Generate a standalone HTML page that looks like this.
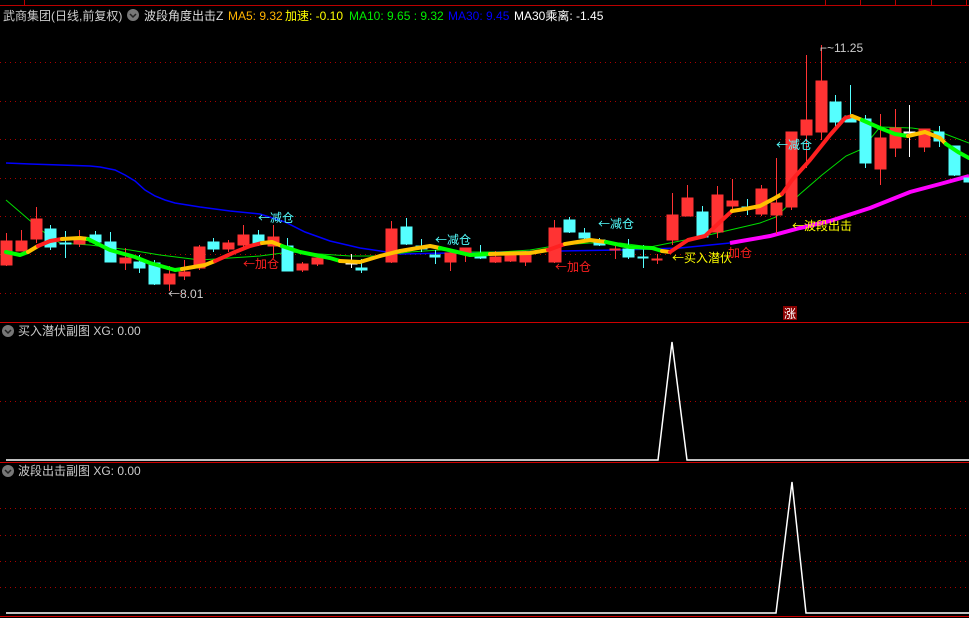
<!DOCTYPE html>
<html><head><meta charset="utf-8"><style>
html,body{margin:0;padding:0;background:#000;width:969px;height:618px;overflow:hidden}
svg{display:block}
text{font-family:"Liberation Sans","Noto Sans CJK SC",sans-serif;font-size:12px}
.ar{font-family:"Noto Sans CJK SC",sans-serif}
</style></head><body>
<svg width="969" height="618" viewBox="0 0 969 618" xmlns="http://www.w3.org/2000/svg">
<rect width="969" height="618" fill="#000"/>
<line x1="0" y1="5.5" x2="969" y2="5.5" stroke="#b00" stroke-width="1"/>
<g stroke="#b00"><line x1="24.5" y1="0" x2="24.5" y2="5"/><line x1="825.5" y1="0" x2="825.5" y2="5"/><line x1="860.5" y1="0" x2="860.5" y2="5"/><line x1="895.5" y1="0" x2="895.5" y2="5"/><line x1="931.5" y1="0" x2="931.5" y2="5"/><line x1="966.5" y1="0" x2="966.5" y2="5"/></g>
<text x="3" y="20" fill="#ccc">武商集团(日线,前复权)</text>
<circle cx="133" cy="15" r="6" fill="#777"/><path d="M130 14l3 3 3-3" stroke="#222" stroke-width="1.5" fill="none"/>
<text x="144" y="20" fill="#ddd">波段角度出击Z</text>
<text x="228" y="20" fill="#ffb400">MA5: 9.32</text>
<text x="285" y="20" fill="#ffff00">加速: -0.10</text>
<text x="349" y="20" fill="#00ee00">MA10: 9.65 : 9.32</text>
<text x="448" y="20" fill="#0000ff">MA30: 9.45</text>
<text x="514" y="20" fill="#fff">MA30乘离: -1.45</text>
<g stroke="#a00" stroke-width="1" stroke-dasharray="1 4">
<line x1="0" y1="62.5" x2="969" y2="62.5"/><line x1="0" y1="101.5" x2="969" y2="101.5"/><line x1="0" y1="139.5" x2="969" y2="139.5"/><line x1="0" y1="178.5" x2="969" y2="178.5"/><line x1="0" y1="216.5" x2="969" y2="216.5"/><line x1="0" y1="254.5" x2="969" y2="254.5"/><line x1="0" y1="293.5" x2="969" y2="293.5"/>
<line x1="0" y1="401.5" x2="969" y2="401.5"/>
<line x1="0" y1="508.5" x2="969" y2="508.5"/><line x1="0" y1="535.5" x2="969" y2="535.5"/><line x1="0" y1="561.5" x2="969" y2="561.5"/><line x1="0" y1="587.5" x2="969" y2="587.5"/>
</g>
<polyline fill="none" stroke="#0000ff" stroke-width="1.5" points="6,163 30,164 60,165 90,166 100,167 115,170 125,175 135,181 145,190 155,196 165,200 175,203 200,207 230,211 260,214 285,222 305,232 330,241 360,248 400,254 450,253 500,252 560,251 620,250 680,248 730,243"/>
<polyline fill="none" stroke="#ff00ff" stroke-width="4" points="730,243 770,236 800,228 830,221 870,208 910,192 940,184 969,176"/>
<polyline fill="none" stroke="#00dd00" stroke-width="1" points="6,200 20,212 35,225 50,237 60,243 90,245 130,250 160,255 200,260 230,258 260,256 290,252 320,254 350,256 380,256 410,252 440,250 470,252 500,252 530,250 560,245 590,243 620,243 650,247 700,237 760,223 776,217 800,194 822,175 846,156 862,149 880,127 912,128 940,132 969,143"/>
<g stroke-width="1">
<g fill="#ff3333" stroke="#ff3333">
<line x1="6.5" y1="233" x2="6.5" y2="266"/><rect x="1" y="241" width="11" height="24"/>
<line x1="21.5" y1="230" x2="21.5" y2="251"/><rect x="16" y="241" width="11" height="10"/>
<line x1="36.5" y1="207" x2="36.5" y2="243"/><rect x="31" y="219" width="11" height="20"/>
<line x1="79.5" y1="230" x2="79.5" y2="247"/><rect x="74" y="237" width="11" height="7"/>
<line x1="125.5" y1="248" x2="125.5" y2="270"/><rect x="120" y="258" width="11" height="5"/>
<line x1="169.5" y1="266" x2="169.5" y2="291"/><rect x="164" y="274" width="11" height="10"/>
<line x1="184.5" y1="260" x2="184.5" y2="280"/><rect x="179" y="272" width="11" height="4"/>
<line x1="199.5" y1="245" x2="199.5" y2="270"/><rect x="194" y="247" width="11" height="21"/>
<line x1="228.5" y1="240" x2="228.5" y2="252"/><rect x="223" y="243" width="11" height="6"/>
<line x1="243.5" y1="225" x2="243.5" y2="247"/><rect x="238" y="235" width="11" height="10"/>
<line x1="273.5" y1="225" x2="273.5" y2="258"/><rect x="268" y="237" width="11" height="9"/>
<line x1="302.5" y1="262" x2="302.5" y2="272"/><rect x="297" y="264" width="11" height="6"/>
<line x1="317.5" y1="254" x2="317.5" y2="266"/><rect x="312" y="258" width="11" height="6"/>
<line x1="391.5" y1="221" x2="391.5" y2="263"/><rect x="386" y="229" width="11" height="33"/>
<line x1="450.5" y1="252" x2="450.5" y2="271"/><rect x="445" y="253" width="11" height="9"/>
<line x1="465.5" y1="248" x2="465.5" y2="262"/><rect x="460" y="248" width="11" height="6"/>
<line x1="495.5" y1="251" x2="495.5" y2="263"/><rect x="490" y="257" width="11" height="5"/>
<line x1="510.5" y1="252" x2="510.5" y2="262"/><rect x="505" y="255" width="11" height="6"/>
<line x1="525.5" y1="251" x2="525.5" y2="266"/><rect x="520" y="254" width="11" height="8"/>
<line x1="554.5" y1="220" x2="554.5" y2="263"/><rect x="549" y="228" width="12" height="34"/>
<line x1="615.5" y1="245" x2="615.5" y2="259"/><rect x="610" y="249" width="10" height="1"/>
<line x1="657.5" y1="254" x2="657.5" y2="264"/><rect x="652" y="259" width="10" height="1"/>
<line x1="672.5" y1="193" x2="672.5" y2="245"/><rect x="667" y="215" width="11" height="25"/>
<line x1="687.5" y1="185" x2="687.5" y2="216"/><rect x="682" y="198" width="11" height="18"/>
<line x1="717.5" y1="186" x2="717.5" y2="238"/><rect x="712" y="195" width="11" height="37"/>
<line x1="732.5" y1="179" x2="732.5" y2="210"/><rect x="727" y="201" width="11" height="5"/>
<line x1="761.5" y1="185" x2="761.5" y2="216"/><rect x="756" y="189" width="11" height="25"/>
<line x1="776.5" y1="158" x2="776.5" y2="234"/><rect x="771" y="203" width="11" height="12"/>
<line x1="791.5" y1="158" x2="791.5" y2="210"/><rect x="786" y="132" width="11" height="75"/>
<line x1="806.5" y1="55" x2="806.5" y2="168"/><rect x="801" y="120" width="11" height="15"/>
<line x1="821.5" y1="45" x2="821.5" y2="140"/><rect x="816" y="81" width="11" height="51"/>
<line x1="880.5" y1="114" x2="880.5" y2="185"/><rect x="875" y="138" width="11" height="31"/>
<line x1="895.5" y1="109" x2="895.5" y2="157"/><rect x="890" y="128" width="11" height="20"/>
<line x1="924.5" y1="129" x2="924.5" y2="152"/><rect x="919" y="129" width="11" height="18"/>
</g>
<g fill="#55ffff" stroke="#55ffff">
<line x1="50.5" y1="225" x2="50.5" y2="250"/><rect x="45" y="229" width="11" height="18"/>
<line x1="65.5" y1="231" x2="65.5" y2="258"/><rect x="60" y="243" width="11" height="1"/>
<line x1="95.5" y1="231" x2="95.5" y2="245"/><rect x="90" y="235" width="11" height="7"/>
<line x1="110.5" y1="232" x2="110.5" y2="262"/><rect x="105" y="242" width="11" height="20"/>
<line x1="139.5" y1="255" x2="139.5" y2="273"/><rect x="134" y="262" width="11" height="6"/>
<line x1="154.5" y1="260" x2="154.5" y2="285"/><rect x="149" y="263" width="11" height="21"/>
<line x1="213.5" y1="238" x2="213.5" y2="252"/><rect x="208" y="242" width="11" height="7"/>
<line x1="258.5" y1="230" x2="258.5" y2="246"/><rect x="253" y="235" width="11" height="8"/>
<line x1="287.5" y1="238" x2="287.5" y2="271"/><rect x="282" y="246" width="11" height="25"/>
<line x1="361.5" y1="259" x2="361.5" y2="273"/><rect x="356" y="268" width="11" height="2"/>
<line x1="406.5" y1="218" x2="406.5" y2="245"/><rect x="401" y="227" width="11" height="17"/>
<line x1="421.5" y1="239" x2="421.5" y2="252"/><rect x="416" y="246" width="11" height="3"/>
<line x1="435.5" y1="250" x2="435.5" y2="264"/><rect x="430" y="255" width="10" height="2"/>
<line x1="480.5" y1="245" x2="480.5" y2="259"/><rect x="475" y="255" width="11" height="3"/>
<line x1="569.5" y1="217" x2="569.5" y2="233"/><rect x="564" y="220" width="11" height="12"/>
<line x1="584.5" y1="228" x2="584.5" y2="240"/><rect x="579" y="233" width="11" height="5"/>
<line x1="599.5" y1="238" x2="599.5" y2="246"/><rect x="594" y="240" width="11" height="5"/>
<line x1="628.5" y1="239" x2="628.5" y2="259"/><rect x="623" y="249" width="11" height="8"/>
<line x1="643.5" y1="245" x2="643.5" y2="268"/><rect x="638" y="257" width="10" height="1"/>
<line x1="702.5" y1="206" x2="702.5" y2="238"/><rect x="697" y="212" width="11" height="25"/>
<line x1="747.5" y1="199" x2="747.5" y2="215"/><rect x="742" y="207" width="10" height="1"/>
<line x1="835.5" y1="95" x2="835.5" y2="130"/><rect x="830" y="102" width="11" height="20"/>
<line x1="850.5" y1="85" x2="850.5" y2="122"/><rect x="845" y="116" width="11" height="6"/>
<line x1="865.5" y1="115" x2="865.5" y2="168"/><rect x="860" y="119" width="11" height="44"/>
<line x1="939.5" y1="126" x2="939.5" y2="147"/><rect x="934" y="132" width="10" height="9"/>
<line x1="954.5" y1="146" x2="954.5" y2="176"/><rect x="949" y="146" width="11" height="29"/>
<rect x="964" y="178" width="5" height="4"/>
</g>
<g stroke="#fff" fill="#fff">
<line x1="351.5" y1="254" x2="351.5" y2="268"/><rect x="346" y="263" width="11" height="1"/>
<line x1="909.5" y1="105" x2="909.5" y2="157"/><rect x="904" y="132" width="11" height="1"/>
</g>
</g>
<g fill="none" stroke-width="4" stroke-linejoin="round" stroke-linecap="round">
<polyline stroke="#00ff00" points="6,252 20,255 28,252"/>
<polyline stroke="#ffc000" points="28,252 38,246"/>
<polyline stroke="#ff2020" points="38,246 50,241 62,239"/>
<polyline stroke="#ffc000" points="62,239 80,238 88,239"/>
<polyline stroke="#00ff00" points="88,239 110,250 135,257 150,263 175,270 182,269"/>
<polyline stroke="#ffc000" points="182,269 205,265 215,261"/>
<polyline stroke="#ff2020" points="215,261 235,252 250,246 262,243"/>
<polyline stroke="#ffc000" points="262,243 272,242 282,246"/>
<polyline stroke="#00ff00" points="282,246 300,252 330,258 340,261"/>
<polyline stroke="#ffc000" points="340,261 360,262 380,256 400,251 430,246 440,248"/>
<polyline stroke="#00ff00" points="440,248 470,255 490,254"/>
<polyline stroke="#ffc000" points="490,254 530,253 548,250"/>
<polyline stroke="#ff2020" points="548,250 565,244"/>
<polyline stroke="#ffc000" points="565,244 590,240 606,242"/>
<polyline stroke="#00ff00" points="606,242 630,247 652,248 662,251"/>
<polyline stroke="#ffc000" points="662,251 670,252"/>
<polyline stroke="#ff2020" points="670,252 688,240 705,236 720,222 732,211"/>
<polyline stroke="#ffc000" points="732,211 745,209 760,206 775,198 782,194"/>
<polyline stroke="#ff2020" points="782,194 792,180 810,160 830,135 845,118 852,116"/>
<polyline stroke="#ffc000" points="852,116 862,120"/>
<polyline stroke="#00ff00" points="862,120 880,128 895,134 908,136"/>
<polyline stroke="#ffc000" points="908,136 925,132 940,138 946,144"/>
<polyline stroke="#00ff00" points="946,144 958,152 969,158"/>
</g>
<text x="258" y="222" fill="#55ffff"><tspan class="ar">←</tspan>减仓</text>
<text x="243" y="268" fill="#ff2020"><tspan class="ar">←</tspan>加仓</text>
<text x="168" y="298" fill="#ccc"><tspan class="ar">←</tspan>8.01</text>
<text x="435" y="244" fill="#55ffff"><tspan class="ar">←</tspan>减仓</text>
<text x="598" y="228" fill="#55ffff"><tspan class="ar">←</tspan>减仓</text>
<text x="555" y="271" fill="#ff2020"><tspan class="ar">←</tspan>加仓</text>
<text x="672" y="262" fill="#ffff00"><tspan class="ar">←</tspan>买入潜伏</text>
<text x="728" y="257" fill="#ff2020">加仓</text>
<text x="776" y="149" fill="#55ffff"><tspan class="ar">←</tspan>减仓</text>
<text x="792" y="230" fill="#ffff00"><tspan class="ar">←</tspan>波段出击</text>
<text x="820" y="52" fill="#ccc">⌐~11.25</text>
<rect x="783" y="306" width="14" height="14" fill="#800"/>
<text x="784" y="318" fill="#fff" font-size="11">涨</text>
<line x1="0" y1="322.5" x2="969" y2="322.5" stroke="#c00"/>
<circle cx="8" cy="331" r="6" fill="#777"/><path d="M5 330l3 3 3-3" stroke="#222" stroke-width="1.5" fill="none"/>
<text x="18" y="335" fill="#ccc">买入潜伏副图 XG: 0.00</text>
<polyline fill="none" stroke="#fff" stroke-width="1.5" points="6,460 658,460 672,342 687,460 969,460"/>
<line x1="0" y1="462.5" x2="969" y2="462.5" stroke="#c00"/>
<circle cx="8" cy="471" r="6" fill="#777"/><path d="M5 470l3 3 3-3" stroke="#222" stroke-width="1.5" fill="none"/>
<text x="18" y="475" fill="#ccc">波段出击副图 XG: 0.00</text>
<polyline fill="none" stroke="#fff" stroke-width="1.5" points="6,613 776,613 792,482 806,613 969,613"/>
<line x1="0" y1="616.5" x2="969" y2="616.5" stroke="#c00"/>
</svg>
</body></html>
